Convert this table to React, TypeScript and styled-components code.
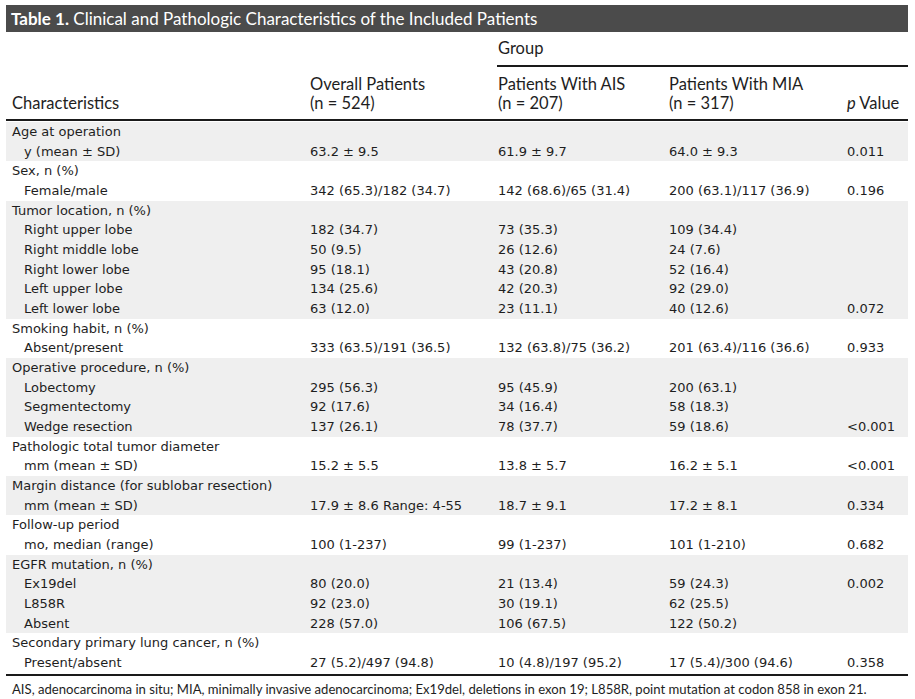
import React from "react";
import styled, { createGlobalStyle } from "styled-components";

const Global = createGlobalStyle`
  html, body { margin: 0; padding: 0; background: #ffffff; }
  body { width: 915px; height: 699px; overflow: hidden; }
`;

const Page = styled.div`
  padding: 5px 7px 0 6px;
  color: #1e1e1e;
`;

const TitleBar = styled.div`
  height: 27px;
  background: #4b4b4b;
  color: #ffffff;
  font-family: Lato, "Liberation Sans", sans-serif;
  font-size: 17px;
  line-height: 27px;
  padding-left: 5px;
  white-space: nowrap;
`;

const TitleLabel = styled.b`
  font-weight: 700;
`;

const cols = "298px 188px 171px 178px 1fr";

const HeadTop = styled.div`
  display: grid;
  grid-template-columns: ${cols};
  font-family: Lato, "Liberation Sans", sans-serif;
  font-size: 16.5px;
  line-height: 19px;
`;

const GroupCell = styled.div`
  grid-column: 3 / 6;
  margin-left: 5px;
  padding: 7px 0 7px 1px;
  border-bottom: 2px solid #1a1a1a;
`;

const HeadMain = styled.div`
  display: grid;
  grid-template-columns: ${cols};
  align-items: end;
  font-family: Lato, "Liberation Sans", sans-serif;
  font-size: 16.5px;
  line-height: 19px;
  padding: 8px 0 6px;
  border-bottom: 2px solid #1a1a1a;
`;

const HeadCell = styled.div`
  padding-left: 6px;
  white-space: nowrap;
`;

const Body = styled.div`
  font-family: "DejaVu Sans", Verdana, sans-serif;
  font-size: 13px;
  line-height: 19.67px;
  padding-top: 1px;
  padding-bottom: 1px;
  border-bottom: 2px solid #1a1a1a;
`;

const Group = styled.div<{ $shade: boolean }>`
  background: ${(p) => (p.$shade ? "#efefef" : "#ffffff")};
`;

const Row = styled.div`
  display: grid;
  grid-template-columns: ${cols};
  white-space: nowrap;
`;

const Cell = styled.div<{ $indent?: boolean }>`
  padding-left: ${(p) => (p.$indent ? "18px" : "6px")};
`;

const Footnote = styled.div`
  font-family: Lato, "Liberation Sans", sans-serif;
  font-size: 13.1px;
  line-height: 14px;
  padding: 6px 0 0 6px;
  white-space: nowrap;
`;

type Sub = [string, string, string, string, string];
type G = { title: string; rows: Sub[] };

const groups: G[] = [
  { title: "Age at operation", rows: [["y (mean \u00b1 SD)", "63.2 \u00b1 9.5", "61.9 \u00b1 9.7", "64.0 \u00b1 9.3", "0.011"]] },
  { title: "Sex, n (%)", rows: [["Female/male", "342 (65.3)/182 (34.7)", "142 (68.6)/65 (31.4)", "200 (63.1)/117 (36.9)", "0.196"]] },
  {
    title: "Tumor location, n (%)",
    rows: [
      ["Right upper lobe", "182 (34.7)", "73 (35.3)", "109 (34.4)", ""],
      ["Right middle lobe", "50 (9.5)", "26 (12.6)", "24 (7.6)", ""],
      ["Right lower lobe", "95 (18.1)", "43 (20.8)", "52 (16.4)", ""],
      ["Left upper lobe", "134 (25.6)", "42 (20.3)", "92 (29.0)", ""],
      ["Left lower lobe", "63 (12.0)", "23 (11.1)", "40 (12.6)", "0.072"],
    ],
  },
  { title: "Smoking habit, n (%)", rows: [["Absent/present", "333 (63.5)/191 (36.5)", "132 (63.8)/75 (36.2)", "201 (63.4)/116 (36.6)", "0.933"]] },
  {
    title: "Operative procedure, n (%)",
    rows: [
      ["Lobectomy", "295 (56.3)", "95 (45.9)", "200 (63.1)", ""],
      ["Segmentectomy", "92 (17.6)", "34 (16.4)", "58 (18.3)", ""],
      ["Wedge resection", "137 (26.1)", "78 (37.7)", "59 (18.6)", "<0.001"],
    ],
  },
  { title: "Pathologic total tumor diameter", rows: [["mm (mean \u00b1 SD)", "15.2 \u00b1 5.5", "13.8 \u00b1 5.7", "16.2 \u00b1 5.1", "<0.001"]] },
  { title: "Margin distance (for sublobar resection)", rows: [["mm (mean \u00b1 SD)", "17.9 \u00b1 8.6 Range: 4-55", "18.7 \u00b1 9.1", "17.2 \u00b1 8.1", "0.334"]] },
  { title: "Follow-up period", rows: [["mo, median (range)", "100 (1-237)", "99 (1-237)", "101 (1-210)", "0.682"]] },
  {
    title: "EGFR mutation, n (%)",
    rows: [
      ["Ex19del", "80 (20.0)", "21 (13.4)", "59 (24.3)", "0.002"],
      ["L858R", "92 (23.0)", "30 (19.1)", "62 (25.5)", ""],
      ["Absent", "228 (57.0)", "106 (67.5)", "122 (50.2)", ""],
    ],
  },
  { title: "Secondary primary lung cancer, n (%)", rows: [["Present/absent", "27 (5.2)/497 (94.8)", "10 (4.8)/197 (95.2)", "17 (5.4)/300 (94.6)", "0.358"]] },
];

export default function App() {
  return (
    <>
      <Global />
      <Page>
        <TitleBar>
          <TitleLabel>Table 1.</TitleLabel> Clinical and Pathologic Characteristics of the Included Patients
        </TitleBar>
        <HeadTop>
          <GroupCell>Group</GroupCell>
        </HeadTop>
        <HeadMain>
          <HeadCell>Characteristics</HeadCell>
          <HeadCell>
            Overall Patients
            <br />
            (n = 524)
          </HeadCell>
          <HeadCell>
            Patients With AIS
            <br />
            (n = 207)
          </HeadCell>
          <HeadCell>
            Patients With MIA
            <br />
            (n = 317)
          </HeadCell>
          <HeadCell>
            <i>p</i> Value
          </HeadCell>
        </HeadMain>
        <Body>
          {groups.map((g, i) => (
            <Group key={g.title} $shade={i % 2 === 0}>
              <Row>
                <Cell>{g.title}</Cell>
              </Row>
              {g.rows.map((r) => (
                <Row key={r[0] + r[1]}>
                  <Cell $indent>{r[0]}</Cell>
                  <Cell>{r[1]}</Cell>
                  <Cell>{r[2]}</Cell>
                  <Cell>{r[3]}</Cell>
                  <Cell>{r[4]}</Cell>
                </Row>
              ))}
            </Group>
          ))}
        </Body>
        <Footnote>
          AIS, adenocarcinoma in situ; MIA, minimally invasive adenocarcinoma; Ex19del, deletions in exon 19; L858R, point mutation at codon 858 in exon 21.
        </Footnote>
      </Page>
    </>
  );
}
